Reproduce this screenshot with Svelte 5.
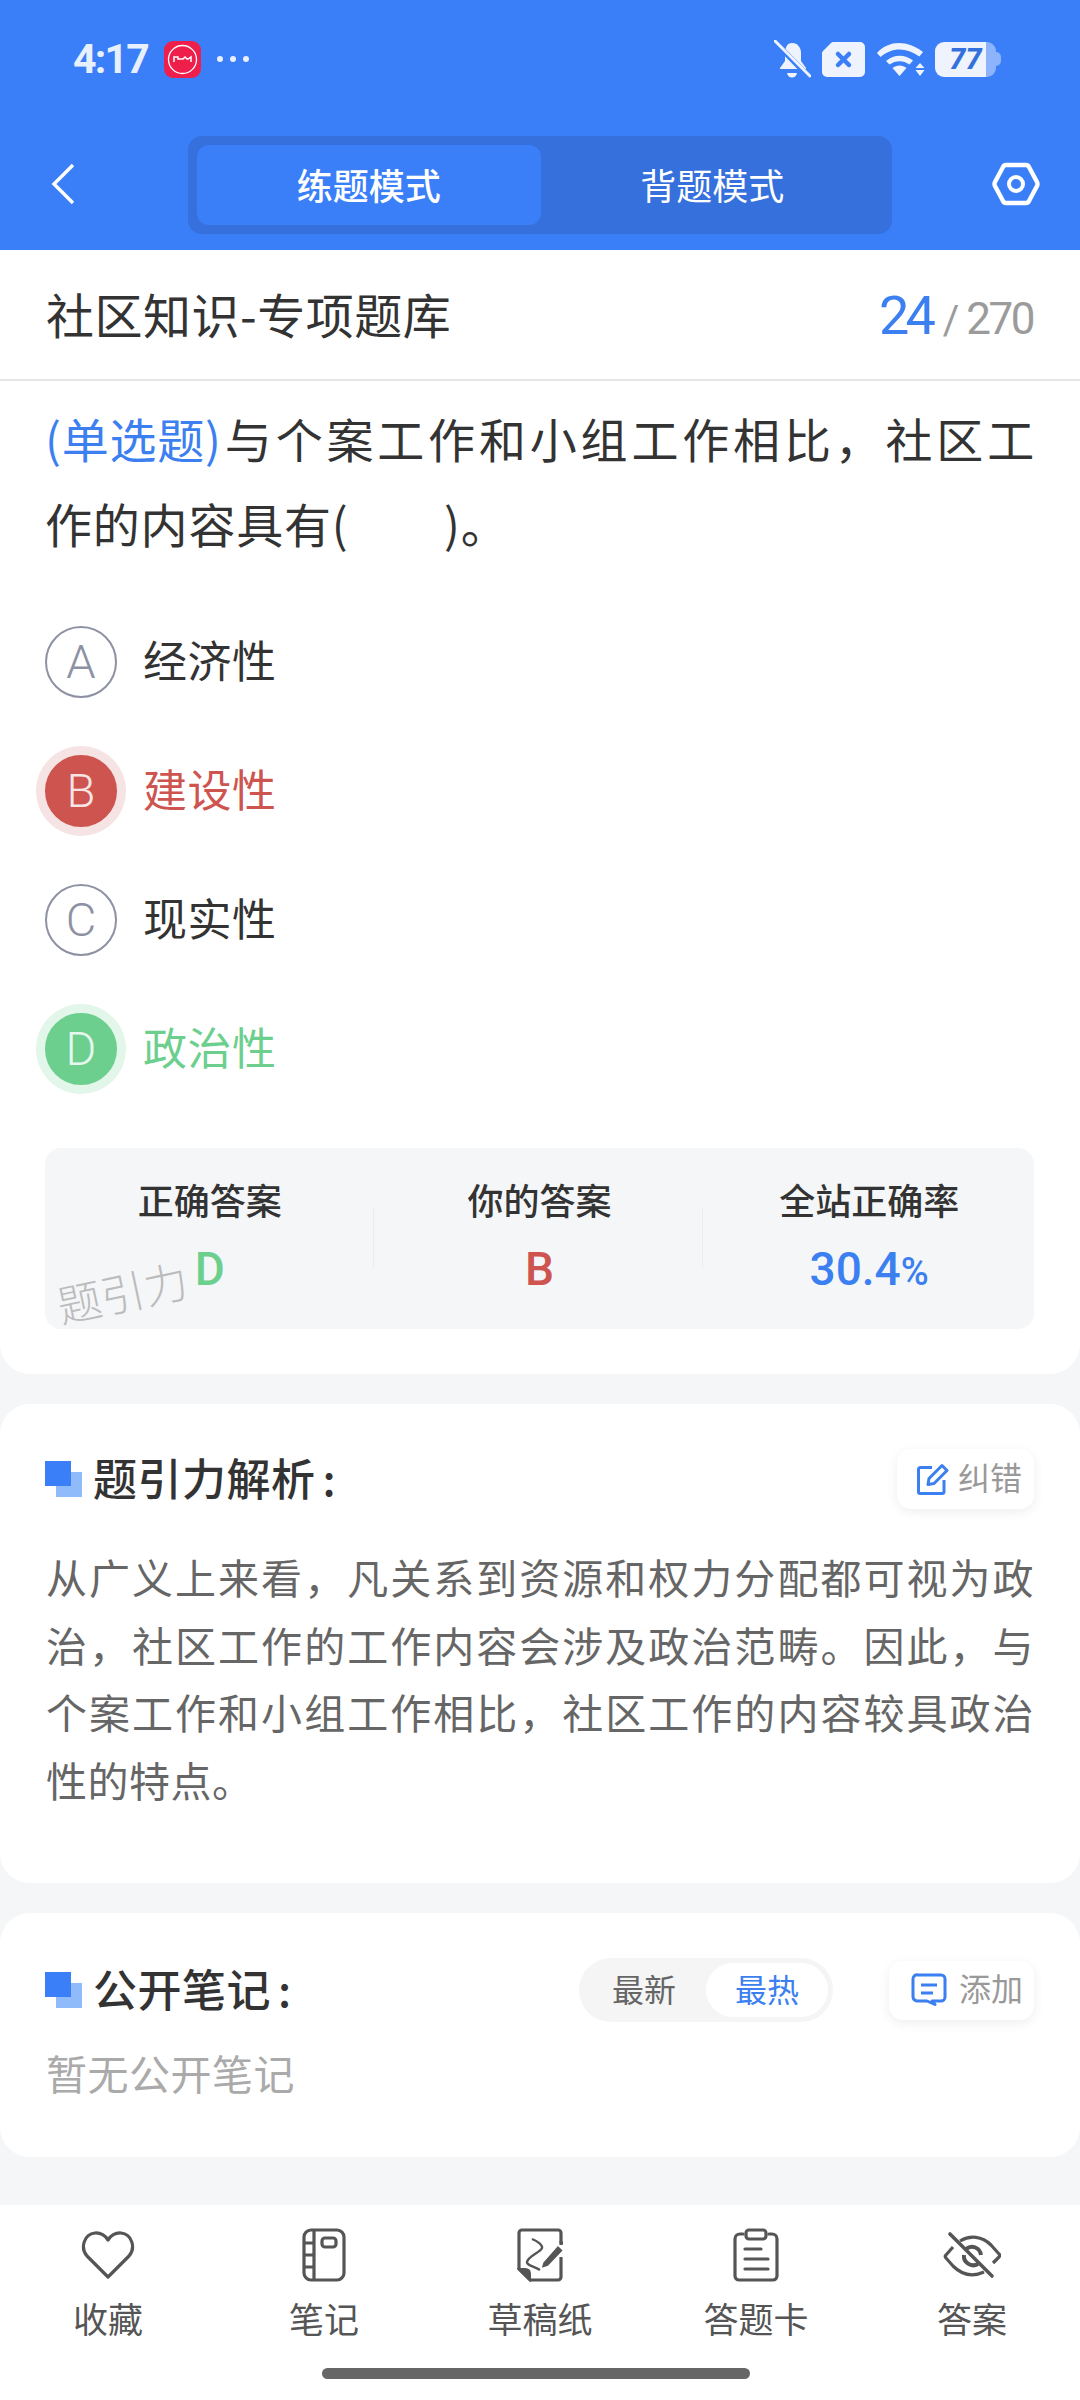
<script>
  const options = [
    { key: 'A', text: '经济性', state: '' },
    { key: 'B', text: '建设性', state: 'wrong' },
    { key: 'C', text: '现实性', state: '' },
    { key: 'D', text: '政治性', state: 'right' }
  ];
</script>

<div class="page">
  <header class="top">
    <div class="status">
      <span class="time">4:17</span>
      <svg class="appicon" width="37" height="37" viewBox="0 0 37 37">
        <rect width="37" height="37" rx="9" fill="#ef1f4b"/>
        <circle cx="18.5" cy="18.5" r="14" fill="none" stroke="#fff" stroke-width="1.3"/>
        <path d="M10 21v-5h4v2h5l2-2 2 2h1l3-2v5" fill="none" stroke="#fff" stroke-width="1.5"/>
      </svg>
      <span class="dots"><i></i><i></i><i></i></span>
      <span class="right-icons">
        <svg width="37" height="39" viewBox="0 0 37 39">
          <path d="M18 3c6 0 9 5 9 10v8l5 7v1H6v-1l5-7v-8c0-5 2-10 7-10z" fill="#eef3fe"/>
          <path d="M13 33h10c-1 6-9 6-10 0z" fill="#eef3fe"/>
          <path d="M-2 -1L37 39" stroke="#3b7ff8" stroke-width="5.5"/>
          <path d="M1 1l35 35" stroke="#eef3fe" stroke-width="3" stroke-linecap="round"/>
        </svg>
        <svg class="xbat" width="43" height="35" viewBox="0 0 43 35">
          <path d="M12 0h26a5 5 0 0 1 5 5v25a5 5 0 0 1-5 5H5a5 5 0 0 1-5-5V11a3 3 0 0 1 1-2L9 1a4 4 0 0 1 3-1z" fill="#eef3fe"/>
          <path d="M16 12l11 11M27 12L16 23" stroke="#3b7ff8" stroke-width="4.5" stroke-linecap="round"/>
        </svg>
        <svg class="wifi" width="48" height="33" viewBox="0 0 48 33">
          <path d="M0 10C12-3 30-3 46 9l-3.600 4.500C29 4 15 4 3.500 14z" fill="#eef3fe"/>
          <path d="M9 18c8-7 19-7 27-.5l-3.500 4c-6-4.500-14-4.500-20 0z" fill="#eef3fe"/>
          <path d="M15.500 25c4-3.500 10-3.500 14 0L22.500 33z" fill="#eef3fe"/>
          <path d="M43 20l4.500 5h-9zM43 33l-4.500-6h9z" fill="#eef3fe"/>
        </svg>
        <span class="battery"><span class="bfill">77</span><span class="bcap"></span><span class="bnub"></span></span>
      </span>
    </div>
    <nav class="nav">
      <svg class="back" width="24" height="42" viewBox="0 0 24 42">
        <path d="M22 2L3 21l19 19" fill="none" stroke="#fff" stroke-width="3.4"/>
      </svg>
      <div class="tabs">
        <div class="tab active">练题模式</div>
        <div class="tab">背题模式</div>
      </div>
      <svg class="hex" width="48" height="44" viewBox="0 0 48 44">
        <path d="M14 3h20q2 0 3 2l8 15q1 2 0 4l-8 15q-1 2-3 2H14q-2 0-3-2L3 24q-1-2 0-4l8-15q1-2 3-2z" fill="none" stroke="#fff" stroke-width="4.400"/>
        <circle cx="24" cy="22" r="7" fill="none" stroke="#fff" stroke-width="4"/>
      </svg>
    </nav>
  </header>

  <section class="card first">
    <div class="titlebar">
      <h1>社区知识-专项题库</h1>
      <div class="count"><b>24</b><span class="slash">/</span><span class="total">270</span></div>
    </div>
    <p class="question"><span class="qline"><span class="qtype">(单选题)</span>与个案工作和小组工作相比，社区工</span>作的内容具有(　　)。</p>
    <div class="options">
      {#each options as o}
        <div class="option {o.state}">
          <span class="letter">{o.key}</span>
          <span class="otext">{o.text}</span>
        </div>
      {/each}
    </div>
    <div class="stats">
      <div class="stat">
        <div class="slabel">正确答案</div>
        <div class="sval green">D</div>
      </div>
      <div class="stat div">
        <div class="slabel">你的答案</div>
        <div class="sval red">B</div>
      </div>
      <div class="stat div">
        <div class="slabel">全站正确率</div>
        <div class="sval blue">30.4<small>%</small></div>
      </div>
      <span class="mark">题引力</span>
    </div>
  </section>

  <section class="card analysis">
    <div class="head">
      <span class="sq"></span>
      <h2>题引力解析<span class="colon">:</span></h2>
      <div class="pill fix">
        <svg width="32" height="32" viewBox="0 0 32 32" fill="none" stroke="#3b7ff0" stroke-width="3">
          <path d="M15 4.500H3.500a2 2 0 0 0-2 2V29a1.500 1.500 0 0 0 1.500 1.500H25a2 2 0 0 0 2-2V17"/>
          <path d="M11 21.500l1-6L25 2.500l5 5L17 20.500z" stroke-linejoin="round"/>
        </svg>
        <span>纠错</span>
      </div>
    </div>
    <p class="body">从广义上来看，凡关系到资源和权力分配都可视为政治，社区工作的工作内容会涉及政治范畴。因此，与个案工作和小组工作相比，社区工作的内容较具政治性的特点。</p>
  </section>

  <section class="card notes">
    <div class="head tall">
      <span class="sq"></span>
      <h2>公开笔记<span class="colon">:</span></h2>
      <div class="toggle">
        <span class="seg">最新</span>
        <span class="seg on">最热</span>
      </div>
      <div class="pill add">
        <svg width="36" height="34" viewBox="0 0 36 34" fill="none" stroke="#3b7ff0" stroke-width="3">
          <path d="M7 2h23a4 4 0 0 1 4 4v18a4 4 0 0 1-4 4h-5l-4 0 0 0 3 3.500-8-3.500H7a4.500 4.500 0 0 1-5-4V6a4 4 0 0 1 5-4z" stroke-linejoin="round"/>
          <path d="M10 12h16M10 20h12"/>
        </svg>
        <span>添加</span>
      </div>
    </div>
    <p class="empty">暂无公开笔记</p>
  </section>

  <footer class="bottom">
    <div class="tools">
      <div class="tool">
        <svg width="54" height="48" viewBox="0 0 54 48" fill="none" stroke="#555" stroke-width="3.200" stroke-linejoin="round">
          <path d="M27 46L6 25C-1 17 3 3 14 2c6-.4 10 2.500 13 7 3-4.500 7-7.400 13-7 11 1 15 15 8 23z"/>
        </svg>
        <span>收藏</span>
      </div>
      <div class="tool">
        <svg width="44" height="54" viewBox="0 0 44 54" fill="none" stroke="#555" stroke-width="3.200">
          <rect x="2" y="2" width="40" height="50" rx="7"/>
          <path d="M12 2v50M2 15h10M2 27h10M2 39h10"/>
          <rect x="20" y="10" width="14" height="9" rx="3"/>
        </svg>
        <span>笔记</span>
      </div>
      <div class="tool">
        <svg width="46" height="54" viewBox="0 0 46 54" fill="none" stroke="#555" stroke-width="3.200">
          <path d="M44 17V5a3 3 0 0 0-3-3H5a3 3 0 0 0-3 3v36l11 11h28a3 3 0 0 0 3-3V29"/>
          <path d="M2 41h6q5 0 5 5v6z" fill="#555" stroke-width="2"/>
          <path d="M15 11c5 2 11 6 10 9-1 4-14 8-15 14-.5 3 6 4 13 8" stroke-width="2.400"/>
          <path d="M27 35l14-16 3.500 3.500L30.500 37 26 38.500z" fill="#555" stroke-width="1.500"/>
          <path d="M43 13l3 3" stroke-width="3"/>
        </svg>
        <span>草稿纸</span>
      </div>
      <div class="tool">
        <svg width="46" height="54" viewBox="0 0 46 54" fill="none" stroke="#555" stroke-width="3.200" stroke-linecap="round">
          <path d="M10 6H7a5 5 0 0 0-5 5v37a4 4 0 0 0 4 4h34a4 4 0 0 0 4-4V11a5 5 0 0 0-5-5h-3"/>
          <rect x="13" y="2" width="20" height="9" rx="3"/>
          <path d="M12 21h16M12 31h23M12 41h23"/>
        </svg>
        <span>答题卡</span>
      </div>
      <div class="tool">
        <svg width="58" height="48" viewBox="0 0 58 48" fill="none" stroke="#555" stroke-width="3.200">
          <path d="M17 10c10-6 22-5 31 4l8 9c1 1 1 2 0 3l-6 6M41 41c-11 5-22 3-31-6l-7-8c-1-1-1-2 0-3l7-8"/>
          <path d="M35 33c-7 4-15-2-14-9M23 18c6-5 14-1 15 6" stroke-width="4"/>
          <path d="M7 3l42 42" stroke-width="3.600" stroke-linecap="round"/>
        </svg>
        <span>答案</span>
      </div>
    </div>
    <div class="homebar"></div>
  </footer>
</div>

<style>
  :global(body) {
    margin: 0;
    background: #f5f6f8;
  }
  .page {
    width: 1080px;
    min-height: 2400px;
    display: flex;
    flex-direction: column;
    font-family: "Noto Sans CJK SC", "Noto Sans", sans-serif;
    color: #333;
  }
  .top {
    height: 250px;
    background: #3b7ff8;
    color: #fff;
  }
  .status {
    height: 118px;
    display: flex;
    align-items: center;
    padding: 0 79px 0 73px;
    box-sizing: border-box;
  }
  .time {
    font-family: Roboto, sans-serif;
    font-weight: 700;
    font-size: 41px;
    letter-spacing: -1.800px;
    color: #e8f0fe;
    width: 91px;
  }
  .dots {
    display: flex;
    gap: 7px;
    margin-left: 16px;
  }
  .dots i {
    width: 6px;
    height: 6px;
    border-radius: 50%;
    background: #e8f0fe;
  }
  .appicon { display: block; }
  .right-icons {
    margin-left: auto;
    display: flex;
    align-items: center;
    gap: 11px;
  }
  .wifi { margin-left: 1px; }
  .battery {
    display: flex;
    align-items: center;
    margin-left: -1px;
  }
  .bfill {
    width: 51px;
    height: 35px;
    box-sizing: border-box;
    padding-left: 10px;
    background: #eef3fe;
    border-radius: 9px 0 0 9px;
    color: #3470dc;
    font: italic 800 29px/35px Roboto, sans-serif;
    text-align: center;
  }
  .bcap {
    width: 10px;
    height: 35px;
    background: #8cb3fb;
    border-radius: 0 9px 9px 0;
  }
  .bnub {
    width: 5px;
    height: 14px;
    background: #8cb3fb;
    border-radius: 0 6px 6px 0;
  }
  .nav {
    height: 132px;
    display: flex;
    align-items: flex-start;
    padding-left: 51px;
  }
  .back { margin-top: 45px; }
  .tabs {
    margin: 18px 0 0 113px;
    width: 704px;
    height: 98px;
    box-sizing: border-box;
    padding: 9px 8px 9px 9px;
    background: #3570dc;
    border-radius: 14px;
    display: flex;
  }
  .tab {
    flex: 1;
    display: flex;
    align-items: center;
    justify-content: center;
    font-size: 36px;
    border-radius: 12px;
    padding-bottom: 3px;
    box-sizing: border-box;
  }
  .tab.active {
    background: #3b7ff8;
    font-weight: 500;
  }
  .hex { margin: 44px 0 0 100px; }

  .card {
    background: #fff;
    border-radius: 30px;
    margin-bottom: 30px;
  }
  .card.first {
    border-radius: 0 0 30px 30px;
    padding-bottom: 45px;
  }
  .titlebar {
    height: 129px;
    border-bottom: 2px solid #e6e6e6;
    display: flex;
    align-items: center;
    justify-content: space-between;
    padding: 0 47px 0 46px;
  }
  h1 {
    margin: 0 0 3px;
    font-size: 48px;
    font-weight: 400;
    letter-spacing: 0.5px;
    color: #333;
  }
  .count {
    display: flex;
    align-items: baseline;
    font-family: Roboto, sans-serif;
    color: #9b9b9b;
    margin-top: 1px;
  }
  .count b {
    font-weight: 400;
    font-size: 54px;
    letter-spacing: -4px;
    color: #3b7ff0;
    margin-right: 11px;
  }
  .slash { font-size: 40px; margin-right: 7px; }
  .total { font-size: 44px; letter-spacing: -2.500px; }
  .question {
    margin: 14px 45px 0;
    font-size: 47px;
    letter-spacing: 0.8px;
    line-height: 85px;
    color: #333;
  }
  .qline {
    display: block;
    text-align: justify;
    text-align-last: justify;
  }
  .qtype {
    display: inline-block;
    color: #3b7ff0;
  }
  .options {
    margin: 32px 45px 35px;
  }
  .option {
    height: 129px;
    display: flex;
    align-items: center;
    gap: 26px;
  }
  .letter {
    width: 72px;
    height: 72px;
    box-sizing: border-box;
    border: 2px solid #8d91a3;
    border-radius: 50%;
    display: flex;
    align-items: center;
    justify-content: center;
    font: 300 47px Roboto, sans-serif;
    color: #8d91a3;
  }
  .otext {
    font-size: 44px;
    letter-spacing: 0.5px;
    padding-bottom: 5px;
    color: #333;
  }
  .wrong .letter {
    background: #cd544f;
    border-color: #cd544f;
    color: #f8e4e4;
    box-shadow: 0 0 0 9px #f6e4e5;
  }
  .wrong .otext { color: #cd544f; }
  .right .letter {
    background: #6dcf8e;
    border-color: #6dcf8e;
    color: #e6f8ee;
    box-shadow: 0 0 0 9px #e2f6ea;
  }
  .right .otext { color: #6dcf8e; }
  .stats {
    position: relative;
    margin: 0 46px 0 45px;
    height: 181px;
    background: #f5f6f8;
    border-radius: 16px;
    display: grid;
    grid-template-columns: repeat(3, 1fr);
  }
  .stat {
    position: relative;
    text-align: center;
    padding-top: 26px;
  }
  .stat.div::before {
    content: "";
    position: absolute;
    left: -2px;
    top: 60px;
    height: 59px;
    width: 1px;
    background: #eaecef;
  }
  .slabel {
    font-size: 36px;
    line-height: 50px;
    font-weight: 500;
    color: #333;
  }
  .sval {
    margin-top: 15px;
    font: 500 46px/60px Roboto, sans-serif;
  }
  .sval small { font-size: 38px; }
  .green { color: #6dcf8e; }
  .red { color: #cd544f; }
  .blue { color: #3b7ff0; }
  .mark {
    position: absolute;
    left: 11px;
    top: 118px;
    font-size: 44px;
    line-height: 50px;
    font-weight: 300;
    color: #bcbcbc;
    transform: rotate(-12deg);
  }

  .head {
    height: 60px;
    display: flex;
    align-items: center;
    padding: 0 46px 0 45px;
  }
  .head.tall { height: 64px; }
  .sq {
    position: relative;
    width: 37px;
    height: 36px;
    margin-right: 11px;
    flex: none;
  }
  .sq::before, .sq::after {
    content: "";
    position: absolute;
    width: 26px;
    height: 25px;
  }
  .sq::after {
    left: 0;
    top: 0;
    background: #3b7ff8;
  }
  .sq::before {
    right: 0;
    bottom: 0;
    background: #90bbfb;
  }
  h2 {
    margin: 0 0 4px;
    font-size: 44px;
    letter-spacing: 0.5px;
    font-weight: 500;
    color: #333;
  }
  .colon { margin-left: 7px; }
  .pill {
    display: flex;
    align-items: center;
    box-sizing: border-box;
    background: #fff;
    border-radius: 14px;
    box-shadow: 0 3px 12px rgba(0, 0, 0, 0.07);
    font-size: 32px;
    color: #999;
  }
  .pill span { padding-bottom: 6px; }
  .pill.fix {
    margin-left: auto;
    width: 137px;
    height: 60px;
    padding-left: 20px;
    gap: 9px;
  }
  .pill.add {
    width: 145px;
    height: 59px;
    padding-left: 22px;
    gap: 12px;
    margin-left: 56px;
  }
  .analysis { padding: 45px 0 70px; }
  .body {
    margin: 34px 46px 0;
    font-size: 41px;
    letter-spacing: 0.5px;
    line-height: 67.5px;
    text-align: justify;
    color: #666;
  }
  .notes {
    padding: 45px 0 55px;
    margin-bottom: 48px;
  }
  .toggle {
    margin-left: auto;
    width: 254px;
    height: 64px;
    box-sizing: border-box;
    background: #f5f5f6;
    border-radius: 32px;
    display: flex;
    align-items: center;
    font-size: 32px;
    color: #666;
    padding-right: 5px;
  }
  .seg {
    flex: 1;
    height: 54px;
    box-sizing: border-box;
    padding: 0 0 5px 3px;
    display: flex;
    align-items: center;
    justify-content: center;
    border-radius: 27px;
  }
  .seg.on {
    flex: none;
    width: 122px;
    padding-left: 0;
    background: #fff;
    color: #3b7ff0;
  }
  .empty {
    margin: 20px 46px 0;
    font-size: 41px;
    letter-spacing: 0.5px;
    line-height: 60px;
    color: #aaa;
  }
  .bottom {
    background: #fff;
    height: 195px;
    padding-top: 20px;
    box-sizing: border-box;
  }
  .tools {
    display: grid;
    grid-template-columns: repeat(5, 216px);
  }
  .tool {
    display: flex;
    flex-direction: column;
    align-items: center;
    font-size: 35px;
    color: #555;
  }
  .tool svg {
    height: 60px;
    display: block;
  }
  .tool span {
    margin-top: 10px;
    line-height: 46px;
  }
  .homebar {
    margin: 27px 0 0 322px;
    width: 428px;
    height: 11px;
    border-radius: 6px;
    background: #666;
  }
</style>
